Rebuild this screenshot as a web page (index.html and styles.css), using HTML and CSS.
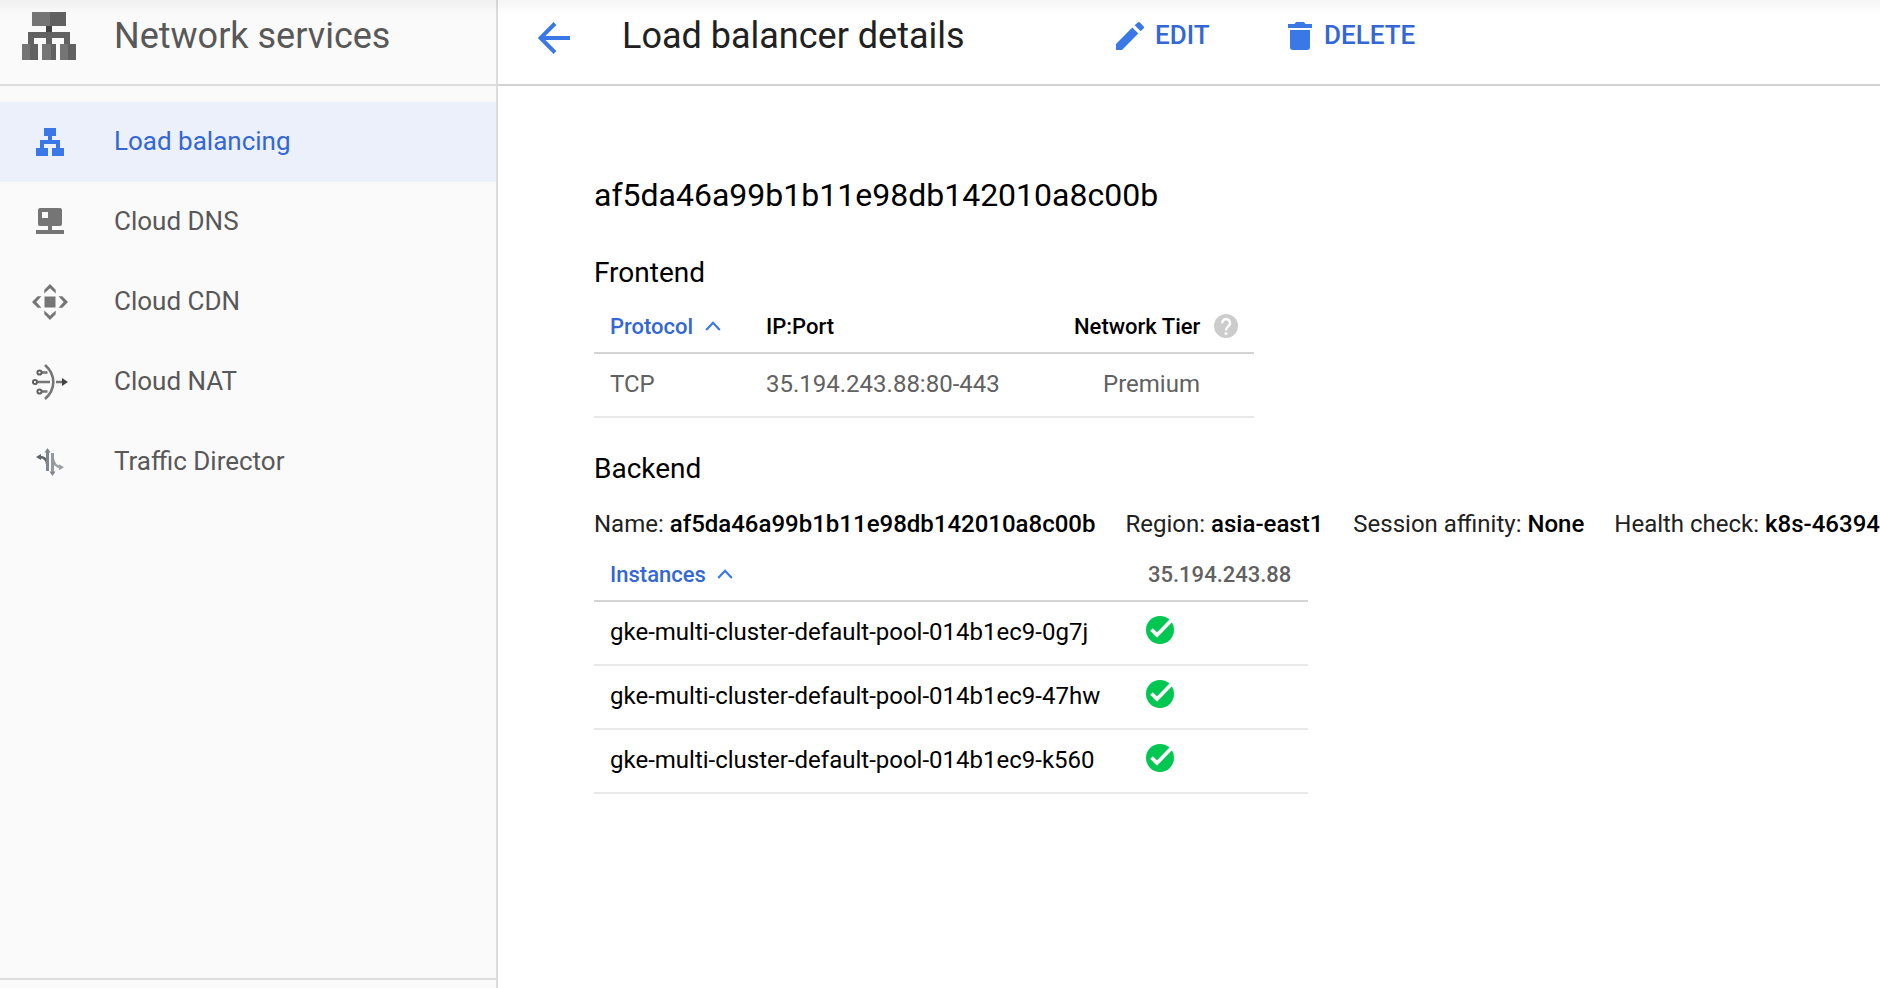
FILE: index.html
```html
<!DOCTYPE html>
<html lang="en">
<head>
<meta charset="utf-8">
<title>Load balancer details</title>
<link rel="stylesheet" href="styles.css">
</head>
<body>
<div class="app">
  <aside class="sidebar">
    <div class="product">
      <svg class="product-icon" viewBox="0 0 54 48" width="54" height="48">
        <path fill="#757575" d="M10 0h18v14H10zM0 32h8v16H0zM20 32h9v16h-9zM38 32h8v16h-8z"/>
        <path fill="#616161" d="M28 0h16v14H28zM6 20h42v12h-6v-6H30v6h-6v-6H12v6H6zM8 32h8v16H8zM29 32h5v16h-5zM46 32h8v16h-8z"/>
        <path fill="#424242" d="M24 14h6v6h-6z"/>
      </svg>
      <span class="product-name">Network services</span>
    </div>
    <nav class="nav">
      <a class="nav-item selected">
        <svg class="nav-icon" viewBox="0 0 36 36" width="36" height="36"><path fill="#3b78e7" d="M12 4h12v8h-4v4h8v8h4v8H20v-8h4v-4H12v4h4v8H4v-8h4v-8h8v-4h-4z"/></svg>
        <span class="nav-label">Load balancing</span>
      </a>
      <a class="nav-item">
        <svg class="nav-icon" viewBox="0 0 36 36" width="36" height="36"><path fill="#757575" fill-rule="evenodd" d="M8 4h20a2 2 0 0 1 2 2v14a2 2 0 0 1-2 2h-8v4h12v4H4v-4h12v-4H8a2 2 0 0 1-2-2V6a2 2 0 0 1 2-2zM10 8v6h6V8z"/></svg>
        <span class="nav-label">Cloud DNS</span>
      </a>
      <a class="nav-item">
        <svg class="nav-icon" viewBox="0 0 36 36" width="36" height="36"><path fill="#757575" d="M12.500 12.500h11v11h-11zM18 0l5.700 5.700v3.800L18 4.300l-5.700 5.200V5.700zM18 36l5.700-5.700v-3.800L18 31.700l-5.700-5.200v3.800zM0 18l5.700-5.700h3.800L4.300 18l5.200 5.700H5.700zM36 18l-5.700-5.700h-3.800l5.200 5.700-5.200 5.700h3.800z"/></svg>
        <span class="nav-label">Cloud CDN</span>
      </a>
      <a class="nav-item">
        <svg class="nav-icon" viewBox="0 0 36 36" width="36" height="36">
          <g fill="none" stroke="#757575" stroke-width="2.600"><path d="M13 1q8.300 7.300 8.300 17T13 35"/><path stroke-width="2.400" d="M6 18h12M10 8.500h5.500M10 27.500h5.500M24 18h7"/></g>
          <g fill="none" stroke="#616161" stroke-width="2"><circle cx="3" cy="18" r="2.100"/><circle cx="7.500" cy="8.500" r="2.100"/><circle cx="7.500" cy="27.500" r="2.100"/></g>
          <path fill="#424242" d="M30 14l6 4-6 4z"/>
        </svg>
        <span class="nav-label">Cloud NAT</span>
      </a>
      <a class="nav-item">
        <svg class="nav-icon" viewBox="0 0 36 36" width="36" height="36">
          <path fill="none" stroke="#5f6368" stroke-width="2.400" d="M8 13q7 .5 7 7"/><path fill="#5f6368" d="M4 13l5-3v6z"/>
          <path fill="none" stroke="#9aa0a6" stroke-width="2.400" d="M21 15q1 7 7 8"/><path fill="#9aa0a6" d="M32 23.200l-5-2.900v6z"/>
          <path fill="#80868b" d="M14 8h3v19h-3zM12.500 8.500L15.500 4l3 4.500zM17.500 27.500l3 4.500 3-4.500z"/>
          <path fill="#9299a0" d="M19 9h3v19h-3z"/>
        </svg>
        <span class="nav-label">Traffic Director</span>
      </a>
    </nav>
    <div class="sidebar-foot"></div>
  </aside>
  <main class="main">
    <header class="toolbar">
      <svg class="back" viewBox="0 0 32 32" width="32" height="32"><path fill="none" stroke="#3b78e7" stroke-width="4" d="M32 16H3M17 1.500L2.500 16 17 30.500"/></svg>
      <span class="page-title">Load balancer details</span>
      <a class="action edit">
        <svg viewBox="0 0 28 28" width="28" height="28"><path fill="#3b78e7" d="M0 22v6h6L22.300 11.500l-6-6zM27.500 6.400a1.600 1.600 0 0 0 0-2.200L23.900.5a1.600 1.600 0 0 0-2.200 0L18.700 3.300l6 6z"/></svg>
        <span class="edit-label">EDIT</span>
      </a>
      <a class="action delete">
        <svg viewBox="0 0 24 28" width="24" height="28"><path fill="#3b78e7" d="M2 8h20v17a3 3 0 0 1-3 3H5a3 3 0 0 1-3-3zM24 2v4H0V2h6.500l1.500-2h8l1.500 2z"/></svg>
        <span class="delete-label">DELETE</span>
      </a>
    </header>
    <section class="content">
      <h1 class="name">af5da46a99b1b11e98db142010a8c00b</h1>
      <h2 class="section-title">Frontend</h2>
      <div class="table frontend">
        <div class="thead">
          <span class="sorted">Protocol<svg class="caret" viewBox="0 0 16 10" width="16" height="10"><path fill="none" stroke="#3b78e7" stroke-width="2.200" d="M1.200 9L8 1.800 14.800 9"/></svg></span>
          <span>IP:Port</span>
          <span class="tier">Network Tier<svg class="help" viewBox="0 0 24 24" width="24" height="24"><circle cx="12" cy="12" r="12" fill="#ccc"/><path fill="none" stroke="#fff" stroke-width="2.400" d="M8.200 9.200a3.900 3.900 0 1 1 6.500 2.700C13 13.300 12 14.200 12 16.400"/><circle cx="12" cy="19.500" r="1.600" fill="#fff"/></svg></span>
        </div>
        <div class="row"><span>TCP</span><span>35.194.243.88:80-443</span><span class="tier-value">Premium</span></div>
      </div>
      <h2 class="section-title backend-title">Backend</h2>
      <div class="facts">
        <span>Name: <b>af5da46a99b1b11e98db142010a8c00b</b></span>
        <span>Region: <b>asia-east1</b></span>
        <span>Session affinity: <b>None</b></span>
        <span>Health check: <b>k8s-46394</b></span>
      </div>
      <div class="table backend">
        <div class="thead">
          <span class="sorted">Instances<svg class="caret" viewBox="0 0 16 10" width="16" height="10"><path fill="none" stroke="#3b78e7" stroke-width="2.200" d="M1.200 9L8 1.800 14.800 9"/></svg></span>
          <span class="ip">35.194.243.88</span>
        </div>
        <div class="row"><span>gke-multi-cluster-default-pool-014b1ec9-0g7j</span><svg class="ok" viewBox="0 0 28 28" width="28" height="28"><circle cx="14" cy="14" r="14" fill="#00c752"/><path fill="none" stroke="#fff" stroke-width="3.800" d="M5.500 13.500l5.500 5.500L25.500 4"/></svg></div>
        <div class="row"><span>gke-multi-cluster-default-pool-014b1ec9-47hw</span><svg class="ok" viewBox="0 0 28 28" width="28" height="28"><circle cx="14" cy="14" r="14" fill="#00c752"/><path fill="none" stroke="#fff" stroke-width="3.800" d="M5.500 13.500l5.500 5.500L25.500 4"/></svg></div>
        <div class="row"><span>gke-multi-cluster-default-pool-014b1ec9-k560</span><svg class="ok" viewBox="0 0 28 28" width="28" height="28"><circle cx="14" cy="14" r="14" fill="#00c752"/><path fill="none" stroke="#fff" stroke-width="3.800" d="M5.500 13.500l5.500 5.500L25.500 4"/></svg></div>
      </div>
    </section>
  </main>
  <div class="top-shade"></div>
</div>
</body>
</html>
```
FILE: styles.css
```css
* { box-sizing: border-box; }
body { margin: 0; font-family: Roboto, sans-serif; background: #fff; color: #000; overflow: hidden; }
svg { display: block; flex: none; }
.app { position: relative; display: flex; width: 1880px; height: 988px; overflow: hidden; }
.sidebar { display: flex; flex-direction: column; flex: none; width: 498px; background: #fafafa; border-right: 2px solid #dcdcdc; }
.product { display: flex; height: 86px; padding: 12px 0 0 22px; border-bottom: 2px solid #dcdcdc; }
.product-name { margin-left: 38px; font-size: 36px; line-height: 48px; color: #585858; white-space: nowrap; }
.nav { padding-top: 16px; flex: 1; }
.nav-item { display: flex; align-items: center; height: 80px; padding-left: 32px; font-size: 26px; color: #585858; }
.nav-label { margin-left: 46px; padding-bottom: 2px; }
.selected { background: #ecf0fb; color: #3367d6; }
.sidebar-foot { height: 10px; border-top: 2px solid #dcdcdc; }
.main { flex: 1; min-width: 0; }
.toolbar { display: flex; height: 86px; border-bottom: 2px solid #d2d2d2; }
.back { margin: 22px 0 0 40px; }
.page-title { width: 494px; margin: 12px 0 0 52px; font-size: 36px; line-height: 48px; color: #212121; white-space: nowrap; }
.action { display: flex; padding-top: 22px; gap: 11px; font-size: 26px; line-height: 26px; font-weight: 500; color: #3367d6; }
.edit { width: 172px; }
.delete { gap: 12px; }
.content { padding: 89px 0 0 96px; }
.name { margin: 0; font-size: 32px; line-height: 40px; font-weight: 400; }
.section-title { margin: 40px 0 0; font-size: 28px; line-height: 36px; font-weight: 400; }
.table { display: flex; flex-direction: column; }
.thead, .row { display: grid; align-items: center; }
.thead { height: 54px; border-bottom: 2px solid #d4d4d4; font-size: 22px; font-weight: 500; }
.row { height: 64px; padding-bottom: 2px; border-bottom: 2px solid #e9e9e9; font-size: 24px; }
.frontend { width: 660px; margin-top: 9px; }
.frontend .thead, .frontend .row { grid-template-columns: 156px 308px 180px; padding-left: 16px; }
.frontend .row { color: #616161; }
.sorted, .tier { display: flex; align-items: center; color: #3367d6; }
.caret { margin-left: 12px; }
.backend .caret { margin-left: 11px; }
.tier { color: #000; }
.help { margin-left: 14px; }
.tier-value { padding-left: 29px; }
.backend-title { margin-top: 33px; }
.facts { display: flex; gap: 30px; margin-top: 21px; font-size: 24px; line-height: 32px; color: #212121; white-space: nowrap; }
.facts b { font-weight: 500; color: #000; }
.backend { width: 714px; margin-top: 8px; }
.backend .thead, .backend .row { grid-template-columns: 536px 160px; padding-left: 16px; }
.backend .ip { padding-left: 2px; color: #616161; }
.ok { margin-bottom: 4px; }
.top-shade { position: absolute; left: 0; top: 0; width: 100%; height: 14px; background: linear-gradient(rgba(0, 0, 0, .04), rgba(0, 0, 0, 0)); }
```
